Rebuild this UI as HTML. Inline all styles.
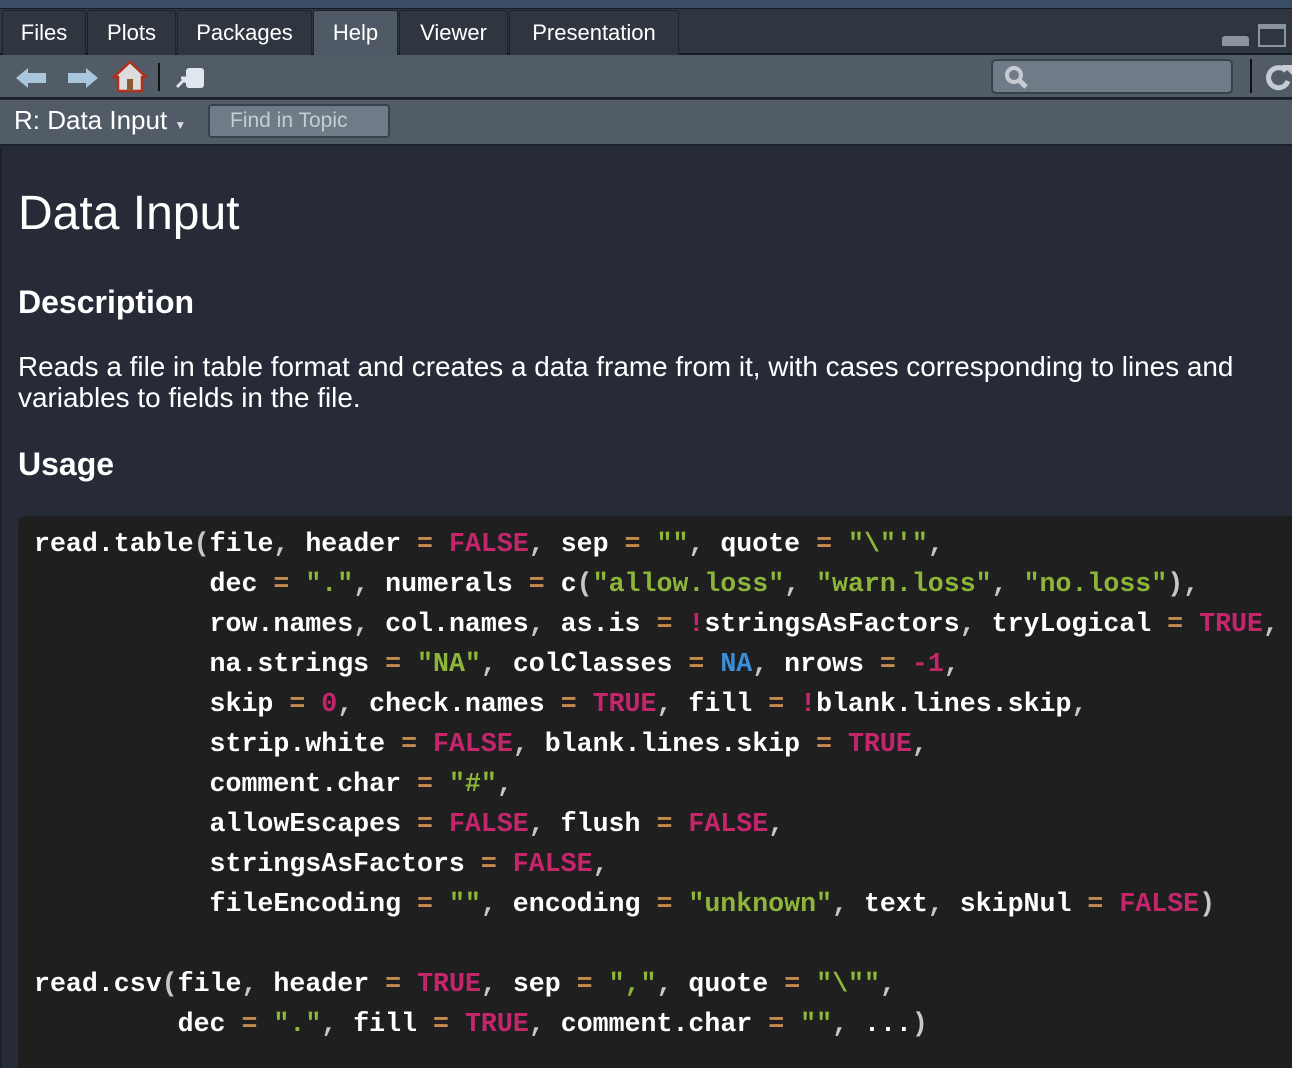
<!DOCTYPE html><html style="overflow:hidden;height:1068px"><head><style>
*{margin:0;padding:0;box-sizing:border-box}
body{width:1292px;height:1068px;overflow:hidden;background:#272b37;font-family:"Liberation Sans",sans-serif;position:relative}
.top{position:absolute;left:0;top:0;width:1292px;height:9px;background:#3a4d66;border-bottom:1px solid #141c26}
.tabbar{position:absolute;left:0;top:9px;width:1292px;height:46px;background:#30363f;border-bottom:2px solid #141c26}
.tab{position:absolute;top:1px;height:45px;background:#30363f;border:1px solid #1c222b;border-bottom:none;border-radius:3px 3px 0 0;color:#fff;font-size:22px;line-height:44px;text-align:center}
.tab.act{background:#4f5a66;height:47px}
.tb{position:absolute;left:0;top:55px;width:1292px;height:44px;background:#525c67;border-bottom:2px solid #1a222c}
.tb2{position:absolute;left:0;top:100px;width:1292px;height:46px;background:#525c67;border-bottom:2px solid #1a222c}
.content{position:absolute;left:0;top:148px;width:1292px;height:920px;border-left:2px solid #1a2230}
h1{position:absolute;left:18px;top:186px;font-size:48px;font-weight:normal;color:#fff}
h2{position:absolute;left:18px;font-size:32px;color:#fff}
p{position:absolute;left:18px;top:351px;font-size:27.9px;color:#fff;line-height:31px;width:1270px}
pre{position:absolute;left:18px;top:516px;width:1300px;height:552px;background:#1f1f1f;border-radius:8px 8px 0 0;padding:8px 16px;font-family:"Liberation Mono",monospace;font-size:26.6px;line-height:40px;color:#fff;font-weight:bold;overflow:hidden}
.o{color:#c58a4f}.s{color:#8cb53a}.k{color:#c3266b}.n{color:#3b8ed8}.p{color:#c8c8c8}
</style></head><body>
<div class="top"></div>
<div class="tabbar">
<div class="tab" style="left:2px;width:84px">Files</div>
<div class="tab" style="left:87px;width:89px">Plots</div>
<div class="tab" style="left:177px;width:135px">Packages</div>
<div class="tab act" style="left:313px;width:85px">Help</div>
<div class="tab" style="left:399px;width:109px">Viewer</div>
<div class="tab" style="left:509px;width:170px">Presentation</div>
<div style="position:absolute;left:1222px;top:27px;width:27px;height:10px;border:2px solid #8a949e;background:#8a949e;border-radius:3px 3px 0 0"></div>
<div style="position:absolute;left:1258px;top:15px;width:28px;height:23px;border:2px solid #8a949e;border-top-width:5px"></div>
</div>
<div class="tb">
<svg style="position:absolute;left:14px;top:10px" width="36" height="26"><polygon points="2,13 14,3 14,8 32,8 32,18 14,18 14,23" fill="#a9c6dd"/></svg>
<svg style="position:absolute;left:66px;top:10px" width="36" height="26"><polygon points="32,13 20,3 20,8 2,8 2,18 20,18 20,23" fill="#a9c6dd"/></svg>
<svg style="position:absolute;left:112px;top:4px" width="36" height="36"><polygon points="18,3 2,18 6,18 6,32 30,32 30,18 34,18" fill="#ddd" stroke="#b0301e" stroke-width="2.5"/><rect x="15" y="20" width="6" height="12" fill="#8a5a30"/></svg>
<div style="position:absolute;left:158px;top:8px;width:2px;height:28px;background:#111"></div>
<svg style="position:absolute;left:174px;top:10px" width="32" height="26"><rect x="12" y="3" width="18" height="20" rx="3" fill="#dfe6ee"/><path d="M3 22 L12 13 M7 13 L12 13 L12 18" stroke="#dfe6ee" stroke-width="3" fill="none"/></svg>
<div style="position:absolute;left:991px;top:4px;width:242px;height:35px;background:#6f7c87;border:2px solid #36414d;border-radius:5px"></div>
<svg style="position:absolute;left:1002px;top:10px" width="30" height="26"><circle cx="12" cy="10" r="7" stroke="#c6ccd2" stroke-width="4" fill="none"/><path d="M17 15 L24 22" stroke="#c6ccd2" stroke-width="5"/></svg>
<div style="position:absolute;left:1250px;top:4px;width:2px;height:34px;background:#111"></div>
<svg style="position:absolute;left:1264px;top:6px" width="28" height="32"><path d="M22 10 A10 10 0 1 0 24 20" stroke="#c6ccd2" stroke-width="5" fill="none"/><polygon points="18,4 28,4 28,14" fill="#c6ccd2"/></svg>
</div>
<div class="tb2">
<div style="position:absolute;left:14px;top:5px;color:#fff;font-size:26px">R: Data Input <span style="font-size:12px;color:#ddd">▼</span></div>
<div style="position:absolute;left:208px;top:4px;width:182px;height:34px;background:#6f7c87;border:2px solid #36414d;border-radius:4px;color:#c5ccd3;font-size:21px;line-height:30px;padding-left:20px">Find in Topic</div>
</div>
<div class="content"></div>
<h1>Data Input</h1>
<h2 style="top:284px">Description</h2>
<p>Reads a file in table format and creates a data frame from it, with cases corresponding to lines and variables to fields in the file.</p>
<h2 style="top:446px">Usage</h2>
<pre>read.table<span class="p">(</span>file<span class="p">,</span> header <span class="o">=</span> <span class="k">FALSE</span><span class="p">,</span> sep <span class="o">=</span> <span class="s">""</span><span class="p">,</span> quote <span class="o">=</span> <span class="s">"\"'"</span><span class="p">,</span>
           dec <span class="o">=</span> <span class="s">"."</span><span class="p">,</span> numerals <span class="o">=</span> c<span class="p">(</span><span class="s">"allow.loss"</span><span class="p">,</span> <span class="s">"warn.loss"</span><span class="p">,</span> <span class="s">"no.loss"</span><span class="p">),</span>
           row.names<span class="p">,</span> col.names<span class="p">,</span> as.is <span class="o">=</span> <span class="k">!</span>stringsAsFactors<span class="p">,</span> tryLogical <span class="o">=</span> <span class="k">TRUE</span><span class="p">,</span>
           na.strings <span class="o">=</span> <span class="s">"NA"</span><span class="p">,</span> colClasses <span class="o">=</span> <span class="n">NA</span><span class="p">,</span> nrows <span class="o">=</span> <span class="k">-1</span><span class="p">,</span>
           skip <span class="o">=</span> <span class="k">0</span><span class="p">,</span> check.names <span class="o">=</span> <span class="k">TRUE</span><span class="p">,</span> fill <span class="o">=</span> <span class="k">!</span>blank.lines.skip<span class="p">,</span>
           strip.white <span class="o">=</span> <span class="k">FALSE</span><span class="p">,</span> blank.lines.skip <span class="o">=</span> <span class="k">TRUE</span><span class="p">,</span>
           comment.char <span class="o">=</span> <span class="s">"#"</span><span class="p">,</span>
           allowEscapes <span class="o">=</span> <span class="k">FALSE</span><span class="p">,</span> flush <span class="o">=</span> <span class="k">FALSE</span><span class="p">,</span>
           stringsAsFactors <span class="o">=</span> <span class="k">FALSE</span><span class="p">,</span>
           fileEncoding <span class="o">=</span> <span class="s">""</span><span class="p">,</span> encoding <span class="o">=</span> <span class="s">"unknown"</span><span class="p">,</span> text<span class="p">,</span> skipNul <span class="o">=</span> <span class="k">FALSE</span><span class="p">)</span>

read.csv<span class="p">(</span>file<span class="p">,</span> header <span class="o">=</span> <span class="k">TRUE</span><span class="p">,</span> sep <span class="o">=</span> <span class="s">","</span><span class="p">,</span> quote <span class="o">=</span> <span class="s">"\""</span><span class="p">,</span>
         dec <span class="o">=</span> <span class="s">"."</span><span class="p">,</span> fill <span class="o">=</span> <span class="k">TRUE</span><span class="p">,</span> comment.char <span class="o">=</span> <span class="s">""</span><span class="p">,</span> ...<span class="p">)</span></pre>
</body></html>
